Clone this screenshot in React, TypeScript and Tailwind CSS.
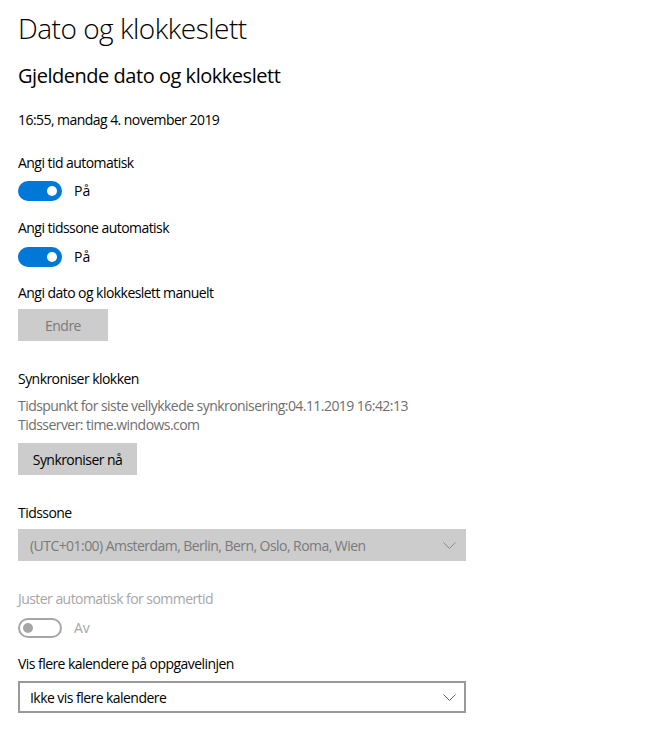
const font = { fontFamily: '"Open Sans", "Noto Sans", sans-serif' };

const Chevron = ({ color }: { color: string }) => (
  <svg width="13" height="7" viewBox="0 0 13 7" className="shrink-0">
    <polyline points="0.5,0.5 6.5,6.5 12.5,0.5" fill="none" stroke={color} strokeWidth="1" />
  </svg>
);

const ToggleOn = ({ label }: { label: string }) => (
  <div className="flex items-center h-5">
    <div className="w-[44px] h-5 rounded-full bg-[#0078d7] flex items-center justify-end pr-[5px]">
      <div className="w-[10px] h-[10px] rounded-full bg-white" />
    </div>
    <span className="ml-3 text-[14px] leading-5 text-black">{label}</span>
  </div>
);

const ToggleOff = ({ label }: { label: string }) => (
  <div className="flex items-center h-5">
    <div className="w-[44px] h-5 rounded-full border-2 border-[#a6a6a6] flex items-center pl-[3px]">
      <div className="w-[10px] h-[10px] rounded-full bg-[#a6a6a6]" />
    </div>
    <span className="ml-3 text-[14px] leading-5 text-[#a6a6a6]">{label}</span>
  </div>
);

export default function App() {
  return (
    <div className="w-[663px] h-[745px] bg-white pl-[18px] pt-[10px] text-black" style={font}>
      <h1 className="text-[28px] leading-[36px] font-light tracking-[-0.5px]">Dato og klokkeslett</h1>
      <h2 className="mt-[16px] text-[20px] leading-[28px] tracking-[-0.47px]">Gjeldende dato og klokkeslett</h2>

      <p className="mt-5 text-[14px] leading-5 tracking-[-0.55px]">16:55, mandag 4. november 2019</p>

      <p className="mt-[23px] text-[14px] leading-5 tracking-[-0.55px]">Angi tid automatisk</p>
      <div className="mt-2">
        <ToggleOn label="På" />
      </div>

      <p className="mt-[17px] text-[14px] leading-5 tracking-[-0.55px]">Angi tidssone automatisk</p>
      <div className="mt-[9px]">
        <ToggleOn label="På" />
      </div>

      <p className="mt-4 text-[14px] leading-5 tracking-[-0.55px]">Angi dato og klokkeslett manuelt</p>
      <button className="mt-[6px] w-[90px] h-8 bg-[#cccccc] text-[#7a7a7a] text-[14px] tracking-[-0.55px] block">
        Endre
      </button>

      <p className="mt-[28px] text-[14px] leading-5 tracking-[-0.55px]">Synkroniser klokken</p>
      <div className="mt-[7px] text-[14px] leading-[19px] text-[#6e6e6e] tracking-[-0.55px]">
        <p>Tidspunkt for siste vellykkede synkronisering:04.11.2019 16:42:13</p>
        <p>Tidsserver: time.windows.com</p>
      </div>
      <button className="mt-[9px] w-[119px] h-8 bg-[#cccccc] text-black text-[14px] tracking-[-0.55px] block">
        Synkroniser nå
      </button>

      <p className="mt-[28px] text-[14px] leading-5 tracking-[-0.55px]">Tidssone</p>
      <div className="mt-[6px] w-[448px] h-8 bg-[#cccccc] flex items-center justify-between pl-3 pr-[10px]">
        <span className="text-[14px] text-[#7a7a7a] tracking-[-0.55px]">
          (UTC+01:00) Amsterdam, Berlin, Bern, Oslo, Roma, Wien
        </span>
        <Chevron color="#8a8a8a" />
      </div>

      <p className="mt-[28px] text-[14px] leading-5 text-[#a6a6a6] tracking-[-0.55px]">Juster automatisk for sommertid</p>
      <div className="mt-[9px]">
        <ToggleOff label="Av" />
      </div>

      <p className="mt-4 text-[14px] leading-5 tracking-[-0.55px]">Vis flere kalendere på oppgavelinjen</p>
      <div className="mt-[7px] w-[448px] h-8 border-2 border-[#999999] flex items-center justify-between pl-[10px] pr-[8px]">
        <span className="text-[14px] text-black tracking-[-0.55px]">Ikke vis flere kalendere</span>
        <Chevron color="#666666" />
      </div>
    </div>
  );
}
